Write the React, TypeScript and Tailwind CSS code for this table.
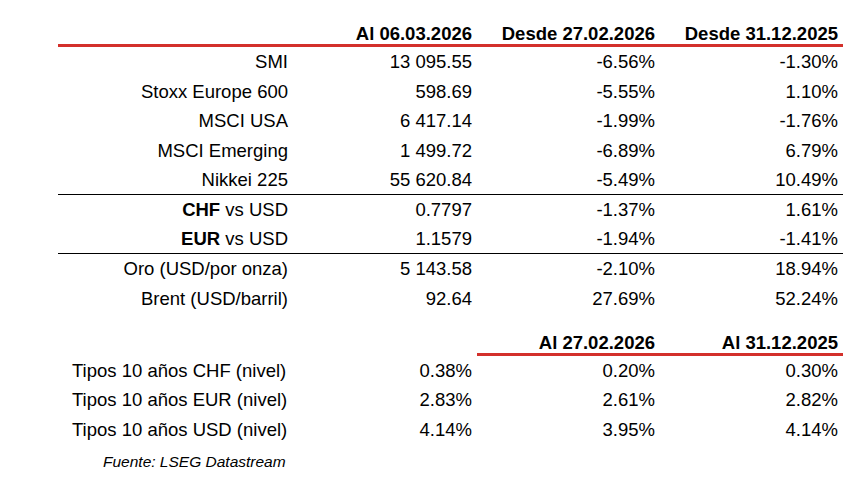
import React from "react";

type Row = {
  label: React.ReactNode;
  v: string;
  a: string;
  b: string;
  line?: boolean;
};

const markets: Row[] = [
  { label: "SMI", v: "13 095.55", a: "-6.56%", b: "-1.30%" },
  { label: "Stoxx Europe 600", v: "598.69", a: "-5.55%", b: "1.10%" },
  { label: "MSCI USA", v: "6 417.14", a: "-1.99%", b: "-1.76%" },
  { label: "MSCI Emerging", v: "1 499.72", a: "-6.89%", b: "6.79%" },
  { label: "Nikkei 225", v: "55 620.84", a: "-5.49%", b: "10.49%", line: true },
  {
    label: (
      <>
        <b>CHF</b> vs USD
      </>
    ),
    v: "0.7797",
    a: "-1.37%",
    b: "1.61%",
  },
  {
    label: (
      <>
        <b>EUR</b> vs USD
      </>
    ),
    v: "1.1579",
    a: "-1.94%",
    b: "-1.41%",
    line: true,
  },
  { label: "Oro (USD/por onza)", v: "5 143.58", a: "-2.10%", b: "18.94%" },
  { label: "Brent (USD/barril)", v: "92.64", a: "27.69%", b: "52.24%" },
];

const rates = [
  { label: "Tipos 10 años CHF (nivel)", v: "0.38%", a: "0.20%", b: "0.30%" },
  { label: "Tipos 10 años EUR (nivel)", v: "2.83%", a: "2.61%", b: "2.82%" },
  { label: "Tipos 10 años USD (nivel)", v: "4.14%", a: "3.95%", b: "4.14%" },
];

const cols = "grid grid-cols-[235px_184px_183px_183px]";

export default function App() {
  return (
    <div className="min-h-screen bg-white text-black font-['Liberation_Sans',Arial,sans-serif] text-[18.5px]">
      <div className="ml-[58px] w-[785px] pt-[24px]">
        {/* header */}
        <div className={`${cols} border-b-[3px] border-[#d3302b] font-bold leading-[20px] text-right`}>
          <div />
          <div className="pr-[5px]">Al 06.03.2026</div>
          <div className="pr-[5px]">Desde 27.02.2026</div>
          <div className="pr-[5px]">Desde 31.12.2025</div>
        </div>

        {markets.map((r, i) => (
          <div
            key={i}
            className={
              r.line
                ? `${cols} h-[29.6px] items-center text-right border-b border-black`
                : `${cols} h-[29.6px] items-center text-right`
            }
          >
            <div className="pr-[5px]">{r.label}</div>
            <div className="pr-[5px]">{r.v}</div>
            <div className="pr-[5px]">{r.a}</div>
            <div className="pr-[5px]">{r.b}</div>
          </div>
        ))}

        {/* rates header */}
        <div className={`${cols} mt-[19.6px] font-bold leading-[20px] text-right`}>
          <div />
          <div />
          <div className="pr-[5px] border-b-[3px] border-[#d3302b]">Al 27.02.2026</div>
          <div className="pr-[5px] border-b-[3px] border-[#d3302b]">Al 31.12.2025</div>
        </div>

        {rates.map((r, i) => (
          <div key={i} className={`${cols} h-[29.6px] items-center text-right`}>
            <div className="pl-[14px] text-left">{r.label}</div>
            <div className="pr-[5px]">{r.v}</div>
            <div className="pr-[5px]">{r.a}</div>
            <div className="pr-[5px]">{r.b}</div>
          </div>
        ))}

        <p className="mt-[7px] pl-[45px] text-[15.5px] italic leading-[20px]">
          Fuente: LSEG Datastream
        </p>
      </div>
    </div>
  );
}
